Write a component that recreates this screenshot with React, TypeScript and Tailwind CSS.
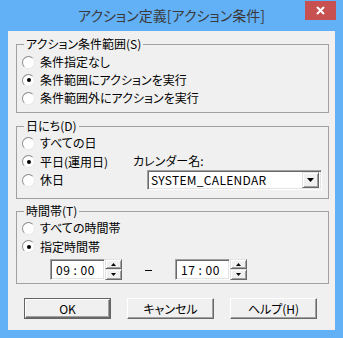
import type { ReactNode } from 'react'

function Radio({ checked, label }: { checked?: boolean; label: string }) {
  return (
    <div className="flex items-center h-[18px]">
      <span className="ml-[1px] w-[13px] h-[13px] rounded-full bg-white border border-t-[#8c8c8c] border-l-[#8c8c8c] border-b-[#e8e8e8] border-r-[#e8e8e8] flex items-center justify-center shrink-0">
        {checked && <span className="w-[4px] h-[4px] rounded-full bg-black" />}
      </span>
      <span className="ml-[5px] leading-[16px]">{label}</span>
    </div>
  )
}

function Group({ title, className, children }: { title: string; className: string; children: ReactNode }) {
  return (
    <fieldset className={`border border-[#a0a0a0] pl-[4px] pr-[4px] ${className}`}>
      <legend className="ml-[3px] px-[2px] leading-[16px]">{title}</legend>
      {children}
    </fieldset>
  )
}

function Sunken({ className, children }: { className: string; children: ReactNode }) {
  return (
    <div
      className={`bg-white border border-t-[#a0a0a0] border-l-[#a0a0a0] border-b-white border-r-white shadow-[inset_1px_1px_0_#696969,inset_-1px_-1px_0_#e3e3e3] ${className}`}
    >
      {children}
    </div>
  )
}

function Arrow({ up, size }: { up?: boolean; size: 'sm' | 'lg' }) {
  const w = size === 'lg' ? 7 : 5
  const h = size === 'lg' ? 4 : 3
  return (
    <svg width={w} height={h} viewBox={`0 0 ${w} ${h}`}>
      <polygon points={up ? `0,${h} ${w},${h} ${w / 2},0` : `0,0 ${w},0 ${w / 2},${h}`} fill="#000" />
    </svg>
  )
}

function Raised({ className, children }: { className: string; children: ReactNode }) {
  return (
    <div
      className={`bg-[#f0f0f0] border border-t-[#e3e3e3] border-l-[#e3e3e3] border-b-[#696969] border-r-[#696969] shadow-[inset_1px_1px_0_#ffffff,inset_-1px_-1px_0_#a0a0a0] flex items-center justify-center ${className}`}
    >
      {children}
    </div>
  )
}

function TimeBox({ value }: { value: string }) {
  return (
    <div className="flex h-[21px]">
      <Sunken className="w-[55px] h-full flex items-center justify-center pr-[4px] leading-[16px] tracking-[0.5px]">{value}</Sunken>
      <div className="w-[17px] h-full flex flex-col">
        <Raised className="h-[10px]">
          <Arrow up size="sm" />
        </Raised>
        <Raised className="h-[11px]">
          <Arrow size="sm" />
        </Raised>
      </div>
    </div>
  )
}

function Button({ label, isDefault }: { label: string; isDefault?: boolean }) {
  return (
    <button
      type="button"
      className={`w-[87px] h-[21px] bg-[#f0f0f0] ${isDefault ? 'border border-[#646464]' : ''}`}
    >
      <span className="flex items-center justify-center h-full border border-t-white border-l-white border-b-[#696969] border-r-[#696969] shadow-[inset_-1px_-1px_0_#a0a0a0] leading-[16px]">
        {label}
      </span>
    </button>
  )
}

export default function App() {
  return (
    <div className="relative w-[343px] h-[338px] bg-[#62b0f6] flex flex-col font-['Noto_Sans_CJK_JP',sans-serif] [font-feature-settings:'palt'] text-[12px] text-black">
      <div className="h-[31px] flex items-center justify-center text-[14px] text-[#3a3a3a] pb-[1px]">
        アクション定義[アクション条件]
      </div>
      <div className="absolute left-[305px] top-[1px] w-[31px] h-[19px] bg-[#c75050] flex items-center justify-center">
        <svg width="9" height="9" viewBox="0 0 9 9">
          <path d="M1 1 L8 8 M8 1 L1 8" stroke="#fff" strokeWidth="2" />
        </svg>
      </div>

      <div className="mx-[8px] h-[299px] bg-[#f0f0f0] pl-[8px] pr-[6px] pt-[5px] flex flex-col">
        <Group title="アクション条件範囲(S)" className="h-[77px]">
          <div className="pt-[1px]">
            <Radio label="条件指定なし" />
            <Radio checked label="条件範囲にアクションを実行" />
            <Radio label="条件範囲外にアクションを実行" />
          </div>
        </Group>

        <Group title="日にち(D)" className="h-[81px] mt-[5px]">
          <div className="flex">
            <div className="w-[112px] flex flex-col">
              <Radio label="すべての日" />
              <div className="h-[19px] flex items-center">
                <Radio checked label="平日(運用日)" />
              </div>
              <Radio label="休日" />
            </div>
            <div className="flex flex-col pt-[18px]">
              <div className="h-[18px] flex items-center leading-[16px]">カレンダー名:</div>
              <Sunken className="ml-[14px] w-[175px] h-[20px] flex items-center pl-[3px] pr-[2px]">
                <span className="flex-1 leading-[16px] tracking-[0.3px]">SYSTEM_CALENDAR</span>
                <Raised className="w-[17px] h-[16px]">
                  <Arrow size="lg" />
                </Raised>
              </Sunken>
            </div>
          </div>
        </Group>

        <Group title="時間帯(T)" className="h-[81px] mt-[4px]">
          <Radio label="すべての時間帯" />
          <div className="h-[19px] flex items-center">
            <Radio checked label="指定時間帯" />
          </div>
          <div className="flex items-center mt-[3px] ml-[29px]">
            <TimeBox value="09 : 00" />
            <span className="w-[7px] mx-[23px] h-[1px] bg-black mt-[2px]" />
            <TimeBox value="17 : 00" />
          </div>
        </Group>

        <div className="flex gap-[16px] ml-[8px] mt-[14px]">
          <Button label="OK" isDefault />
          <Button label="キャンセル" />
          <Button label="ヘルプ(H)" />
        </div>
      </div>
    </div>
  )
}
